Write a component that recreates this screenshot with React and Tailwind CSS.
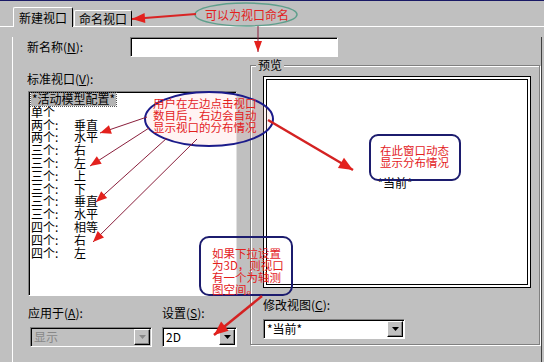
const FONT = "font-['Noto_Sans_CJK_SC','Noto_Sans',sans-serif]";

const ITEMS = [
  ['*活动模型配置*'],
  ['单个'],
  ['两个:', '垂直'],
  ['两个:', '水平'],
  ['三个:', '右'],
  ['三个:', '左'],
  ['三个:', '上'],
  ['三个:', '下'],
  ['三个:', '垂直'],
  ['三个:', '水平'],
  ['四个:', '相等'],
  ['四个:', '右'],
  ['四个:', '左'],
];

// arrowhead triangle pointing at tip, coming from `from`
function head(tip, from, len = 11, half = 4.5) {
  const dx = tip[0] - from[0];
  const dy = tip[1] - from[1];
  const d = Math.hypot(dx, dy);
  const ux = dx / d;
  const uy = dy / d;
  const bx = tip[0] - ux * len;
  const by = tip[1] - uy * len;
  return `${tip[0]},${tip[1]} ${bx - uy * half},${by + ux * half} ${bx + uy * half},${by - ux * half}`;
}

function Arrow({ from, tip, stroke = '#8a1f3c', width = 1, headColor = '#e3211d', len, half }) {
  return (
    <g>
      <line x1={from[0]} y1={from[1]} x2={tip[0]} y2={tip[1]} stroke={stroke} strokeWidth={width} />
      <polygon points={head(tip, from, len, half)} fill={headColor} />
    </g>
  );
}

function Dropdown({ value, width, disabled }) {
  return (
    <div
      className={`flex h-[20px] ${width} border border-t-[#808080] border-l-[#808080] border-b-white border-r-white shadow-[inset_1px_1px_0_#000] ${
        disabled ? 'bg-[#c0c0c0] text-[#888]' : 'bg-white text-black'
      }`}
    >
      <div className="flex-1 pl-[3px] pt-[1px] leading-[16px]">{value}</div>
      <div className="w-[16px] h-[16px] mt-[1px] mr-[1px] flex items-center justify-center bg-[#c0c0c0] border border-t-white border-l-white border-b-black border-r-black shadow-[inset_-1px_-1px_0_#808080]">
        <svg width="7" height="4" viewBox="0 0 7 4">
          <path d="M0 0h7L3.5 4z" fill={disabled ? '#888' : '#000'} />
        </svg>
      </div>
    </div>
  );
}

function Label({ text, hot, className = '' }) {
  // label with underlined access key, e.g. 新名称(N):
  return (
    <div className={`h-[14px] leading-[14px] text-black ${className}`}>
      {text}(<span className="underline">{hot}</span>):
    </div>
  );
}

function Annotations() {
  return (
    <div className="absolute inset-0 pointer-events-none">
      <svg width="544" height="362" className="absolute left-0 top-0">
        {/* name-the-viewport callout */}
        <ellipse cx="246" cy="14.5" rx="51" ry="11.5" fill="none" stroke="#5f9f8c" strokeWidth="1.5" />
        <Arrow from={[196, 14]} tip={[132, 19]} stroke="#d92424" width={2} len={13} half={5} />
        <Arrow from={[258, 26]} tip={[258, 52]} stroke="#8a1f3c" width={1} len={11} half={4} />

        {/* left list callout */}
        <ellipse cx="209" cy="119" rx="64" ry="27" fill="rgba(255,190,190,0.18)" stroke="#1b1b8a" strokeWidth="2" />
        <Arrow from={[147, 117]} tip={[100, 133]} />
        <Arrow from={[149, 128]} tip={[90, 166]} />
        <Arrow from={[167, 138]} tip={[96, 202]} />
        <Arrow from={[197, 139]} tip={[93, 242]} />
        <Arrow from={[268, 120]} tip={[353, 170]} stroke="#d42222" width={2.5} len={14} half={6} />

        {/* preview callout */}
        <rect x="370" y="135" width="90" height="45" rx="8" fill="none" stroke="#1c1c6e" strokeWidth="2" />

        {/* 3D callout */}
        <rect x="200" y="237" width="92" height="58" rx="9" fill="none" stroke="#1c1c6e" strokeWidth="2" />
        <Arrow from={[262, 296]} tip={[214, 335]} stroke="#d42222" width={2.5} len={14} half={6} />
      </svg>

      <div className="absolute left-[205px] top-[7px] leading-[16px] text-[#e3211d]">可以为视口命名</div>
      <div className="absolute left-[153px] top-[97px] text-[11.5px] leading-[12px] text-[#e3211d]">
        <div>用户在左边点击视口</div>
        <div>数目后，右边会自动</div>
        <div>显示视口的分布情况</div>
      </div>
      <div className="absolute left-[380px] top-[144px] text-[11.5px] leading-[12px] text-[#e3211d]">
        <div>在此窗口动态</div>
        <div>显示分布情况</div>
      </div>
      <div className="absolute left-[212px] top-[247px] text-[11.5px] leading-[12px] text-[#e3211d]">
        <div>如果下拉设置</div>
        <div>为3D，则视口</div>
        <div>有一个为轴测</div>
        <div>图空间。</div>
      </div>
    </div>
  );
}

export default function App() {
  return (
    <div className={`relative w-[544px] h-[362px] overflow-hidden bg-[#c0c0c0] text-[12px] ${FONT}`}>
      <div className="h-[1px] bg-[#1a1a66]" />

      {/* tabs */}
      <div className="flex items-end h-[26px] pl-[13px] border-b border-white">
        <div className="relative -mb-px h-[20px] px-[5px] pt-[2px] bg-[#c0c0c0] border-t border-l border-white border-r border-r-black rounded-t-[2px] leading-[16px] text-black z-10">
          新建视口
        </div>
        <div className="h-[16px] px-[4px] ml-[1px] bg-[#c0c0c0] border-t border-l border-white border-r border-r-black rounded-t-[2px] leading-[15px] text-black">
          命名视口
        </div>
      </div>

      {/* tab panel */}
      <div className="ml-[12px] w-[530px] h-[332px] border-l border-white border-r border-r-[#404040] border-b border-b-[#404040]">
        <div className="flex items-center mt-[10px] h-[20px]">
          <Label text="新名称" hot="N" className="ml-[14px] w-[103px]" />
          <div className="w-[208px] h-[20px] bg-white border border-t-[#808080] border-l-[#808080] border-b-white border-r-white shadow-[inset_1px_1px_0_#000]" />
        </div>

        <div className="flex">
          {/* left column */}
          <div className="ml-[15px] w-[210px]">
            <Label text="标准视口" hot="V" className="mt-[15px] -ml-px" />
            <div className="mt-[5px] w-[209px] h-[205px] bg-white border border-t-[#808080] border-l-[#808080] border-b-white border-r-[#e0e0e0] shadow-[inset_1px_1px_0_#000] pt-[1px] pl-[2px]">
              {ITEMS.map((it, i) => (
                <div key={i} className="flex h-[12.8px] leading-[12.8px] text-black">
                  {i === 0 ? (
                    <span className="bg-[#b4b4b4] outline outline-1 outline-dotted outline-[#555] px-[1px]">{it[0]}</span>
                  ) : (
                    <>
                      <span className="w-[43px]">{it[0]}</span>
                      <span>{it[1]}</span>
                    </>
                  )}
                </div>
              ))}
            </div>
            <div className="flex mt-[10px]">
              <div className="w-[134px]">
                <Label text="应用于" hot="A" />
                <div className="mt-[7px] ml-[2px]">
                  <Dropdown value="显示" width="w-[122px]" disabled />
                </div>
              </div>
              <div>
                <Label text="设置" hot="S" />
                <div className="mt-[7px]">
                  <Dropdown value="2D" width="w-[75px]" />
                </div>
              </div>
            </div>
          </div>

          {/* preview group */}
          <div className="relative ml-[12px] mt-[8px] w-[290px] h-[280px] border border-[#808080] shadow-[inset_1px_1px_0_#fff,1px_1px_0_#fff]">
            <div className="absolute -top-[8px] left-[5px] px-[2px] bg-[#c0c0c0] leading-[14px] text-black">预览</div>
            <div className="ml-[12px] mt-[10px] w-[268px] h-[212px] border border-black bg-white p-[2px]">
              <div className="h-full border border-black flex items-center justify-center text-black">
                <span className="mt-[2px] -ml-[4px]">*当前*</span>
              </div>
            </div>
            <Label text="修改视图" hot="C" className="ml-[12px] mt-[10px]" />
            <div className="ml-[12px] mt-[7px]">
              <Dropdown value="*当前*" width="w-[142px]" />
            </div>
          </div>
        </div>
      </div>

      <Annotations />
    </div>
  );
}
